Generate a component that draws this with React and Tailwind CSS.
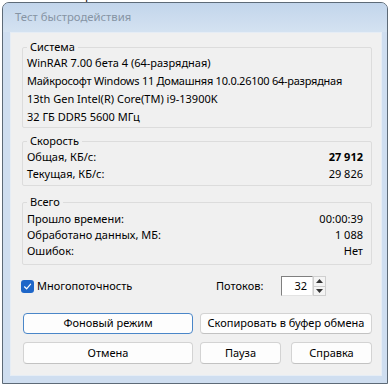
import React from "react";

function Line({ h, label, value, bold, className = "" }) {
  return (
    <div className={`flex items-center justify-between whitespace-nowrap pl-[4px] pr-[8px] ${h} ${className}`}>
      <span>{label}</span>
      {value !== undefined && <span className={bold ? "font-bold" : ""}>{value}</span>}
    </div>
  );
}

function Btn({ children, className = "", primary }) {
  return (
    <div
      className={`flex items-center justify-center whitespace-nowrap rounded-[4px] border bg-[#fdfdfd] ${
        primary ? "border-[#4a86c8]" : "border-[#d3d3d3] border-b-[#c2c2c2]"
      } ${className}`}
    >
      {children}
    </div>
  );
}

export default function App() {
  return (
    <div className="w-[390px] h-[384px] bg-white overflow-hidden font-['Noto_Sans',sans-serif] text-[11px] text-black">
      <div className="h-[2px] overflow-hidden pl-[32px]">
        <div className="-mt-[12px] text-[13px] leading-[14px] text-[#222]">Сжатие файлов</div>
      </div>
      <div className="ml-[2px] w-[386px] h-[382px] rounded-t-[7px] border border-[#5d6a77] bg-[#cfdef0] flex flex-col">
        <div className="h-[29px] shrink-0 rounded-t-[6px] bg-gradient-to-b from-[#c2d5eb] to-[#d4e2f1] pl-[12px] flex items-center text-[11.3px] text-[#8694a4]">
          Тест быстродействия
        </div>
        <div className="ml-[7px] mr-[5px] mb-[7px] flex-1 bg-[#f0f0f0] border border-[#e6edf5] flex flex-col pl-[11px] pr-[9px]">
          <fieldset className="mt-[7px] border border-[#dcdcdc] rounded-[2px] pb-[1px]">
            <legend className="ml-[4px] px-[3px] leading-[14px]">Система</legend>
            <Line h="h-[18px]" label="WinRAR 7.00 бета 4 (64-разрядная)" />
            <Line h="h-[18px]" className="tracking-[-0.25px]" label="Майкрософт Windows 11 Домашняя 10.0.26100 64-разрядная" />
            <Line h="h-[18px]" label="13th Gen Intel(R) Core(TM) i9-13900K" />
            <Line h="h-[18px]" label="32 ГБ DDR5 5600 МГц" />
          </fieldset>
          <fieldset className="mt-[6px] border border-[#dcdcdc] rounded-[2px] pt-[1px] pb-[2px]">
            <legend className="ml-[4px] px-[3px] leading-[14px]">Скорость</legend>
            <Line h="h-[17px]" label="Общая, КБ/с:" value="27 912" bold />
            <Line h="h-[17px]" label="Текущая, КБ/с:" value="29 826" />
          </fieldset>
          <fieldset className="mt-[9px] border border-[#dcdcdc] rounded-[2px] pt-[2px] pb-[5px]">
            <legend className="ml-[4px] px-[3px] leading-[14px]">Всего</legend>
            <Line h="h-[16px]" label="Прошло времени:" value="00:00:39" />
            <Line h="h-[16px]" label="Обработано данных, МБ:" value="1 088" />
            <Line h="h-[16px]" label="Ошибок:" value="Нет" />
          </fieldset>

          <div className="mt-[11px] h-[20px] flex items-center">
            <div className="w-[195px] -ml-[1px] flex items-center">
              <div className="w-[13px] h-[13px] rounded-[3px] bg-[#1e66c8] flex items-center justify-center">
                <svg width="9" height="9" viewBox="0 0 9 9" fill="none">
                  <path d="M1.5 4.8 L3.6 6.8 L7.6 2.2" stroke="white" strokeWidth="1.2" strokeLinecap="round" strokeLinejoin="round" />
                </svg>
              </div>
              <span className="ml-[3px]">Многопоточность</span>
            </div>
            <span className="w-[65px]">Потоков:</span>
            <div className="w-[32px] h-[20px] bg-white border border-[#7f7f7f] border-r-[#e3e3e3] border-b-[#e3e3e3] flex items-center justify-end pr-[5px]">
              32
            </div>
            <div className="w-[13px] h-[20px] flex flex-col">
              <div className="flex-1 bg-[#f4f4f4] border border-[#cfcfcf] flex items-center justify-center">
                <svg width="7" height="4" viewBox="0 0 7 4"><path d="M0 4 L3.5 0 L7 4 Z" fill="#333" /></svg>
              </div>
              <div className="flex-1 bg-[#f4f4f4] border border-t-0 border-[#cfcfcf] flex items-center justify-center">
                <svg width="7" height="4" viewBox="0 0 7 4"><path d="M0 0 L3.5 4 L7 0 Z" fill="#333" /></svg>
              </div>
            </div>
          </div>

          <div className="mt-[17px] ml-[1px] flex gap-[7px] h-[21px]">
            <Btn primary className="w-[170px]">Фоновый режим</Btn>
            <Btn className="flex-1">Скопировать в буфер обмена</Btn>
          </div>
          <div className="mt-[8px] ml-[1px] flex h-[22px]">
            <Btn className="w-[170px]">Отмена</Btn>
            <Btn className="ml-[7px] w-[81px]">Пауза</Btn>
            <Btn className="ml-[10px] flex-1">Справка</Btn>
          </div>
        </div>
      </div>
    </div>
  );
}
